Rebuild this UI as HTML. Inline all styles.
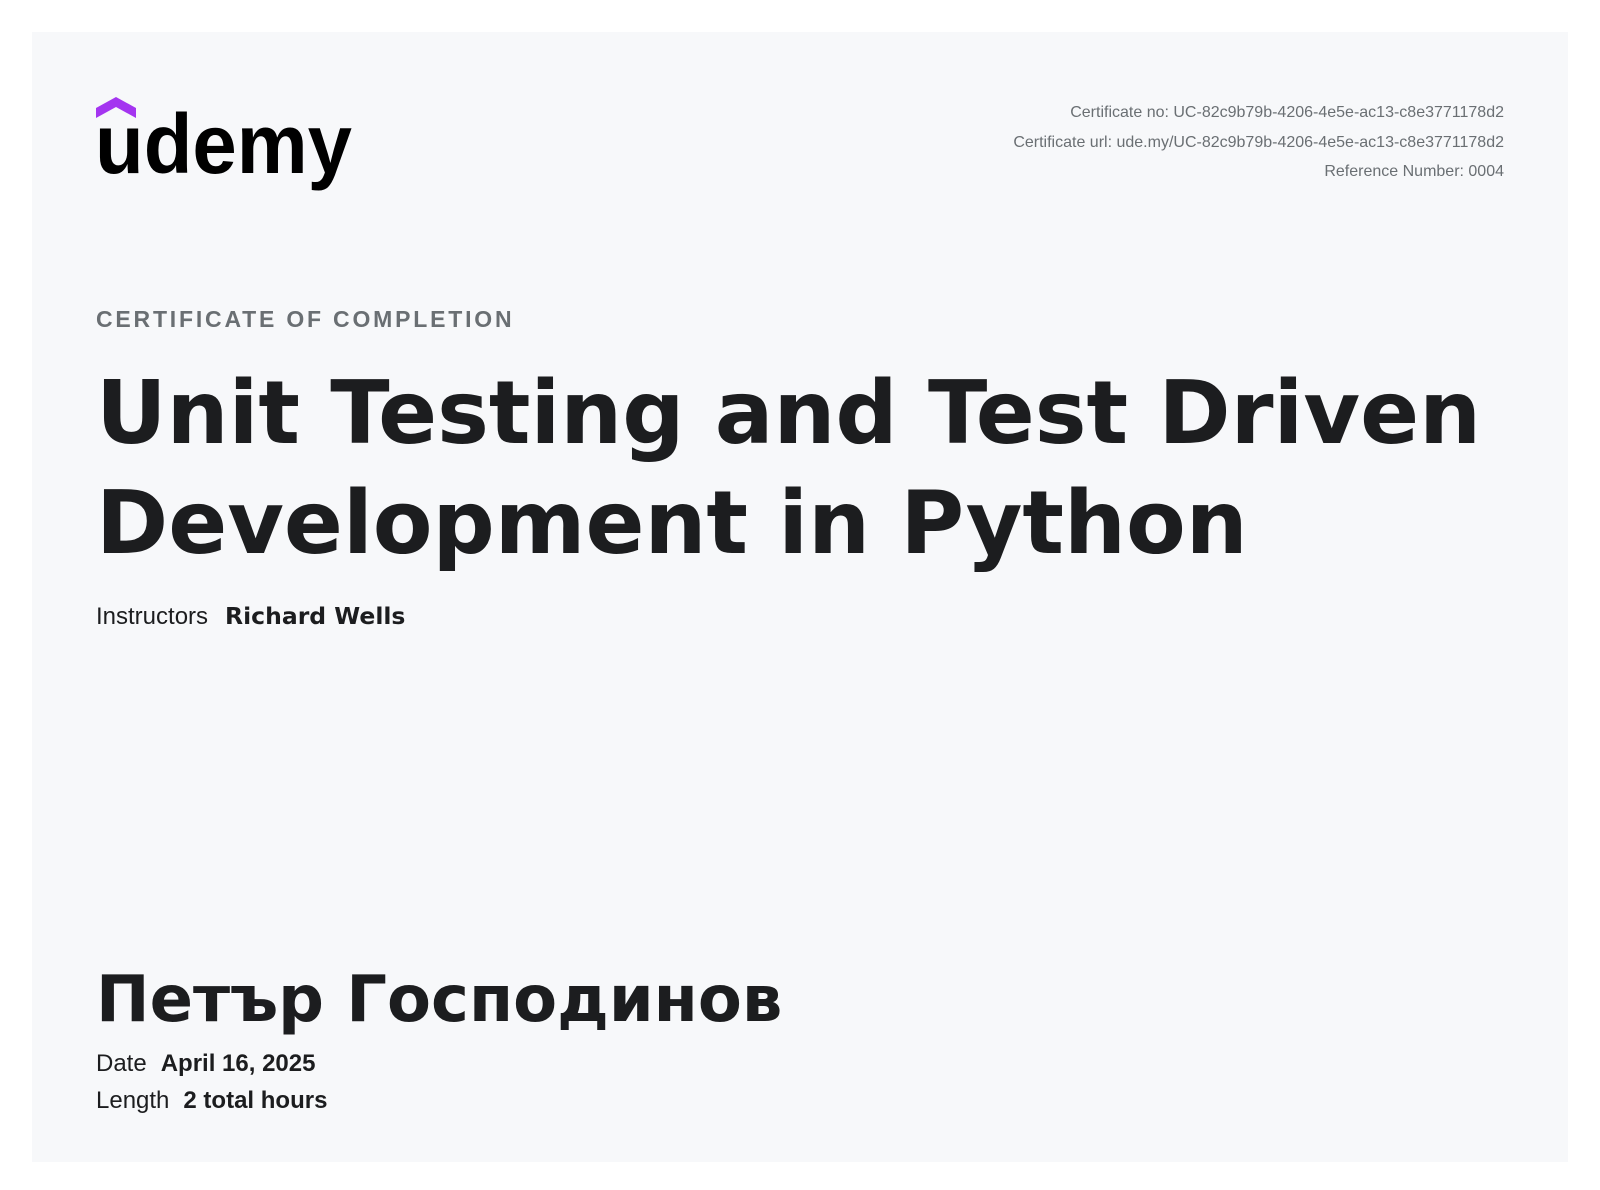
<!DOCTYPE html>
<html><head><meta charset="utf-8"><style>
html,body{margin:0;padding:0;background:#fff;}
body{width:1600px;height:1190px;position:relative;font-family:"Liberation Sans",sans-serif;overflow:hidden}
.card{position:absolute;left:32px;top:32px;width:1536px;height:1130px;background:#f7f8fa}
.meta{position:absolute;right:96px;top:98px;text-align:right;color:#6a6f73;font-size:16px;line-height:29.5px}
.abs{position:absolute;left:96px;margin:0}
.sub{top:306px;font-size:23px;font-weight:bold;letter-spacing:2.8px;color:#6a6f73}
.title{top:358px;font-family:"DejaVu Sans",sans-serif;font-weight:bold;font-size:87px;line-height:110px;color:#1c1d1f;white-space:nowrap}
.line{font-size:24px;color:#1c1d1f;white-space:nowrap}
.line b{margin-left:14px}
.name{top:960px;font-family:"DejaVu Sans",sans-serif;font-weight:bold;font-size:64px;line-height:80px;color:#1c1d1f;white-space:nowrap}
</style></head><body>
<div class="card"></div>
<svg style="position:absolute;left:0;top:0" width="400" height="220">
<path d="M96 108 L116 97 L136 108 L136 118 L116 107 L96 118 Z" fill="#a435f0"/>
<text x="95" y="173" font-family="Liberation Sans" font-weight="bold" font-size="84" textLength="257" lengthAdjust="spacingAndGlyphs" fill="#000">udemy</text>
</svg>
<div class="meta">Certificate no: UC-82c9b79b-4206-4e5e-ac13-c8e3771178d2<br>Certificate url: ude.my/UC-82c9b79b-4206-4e5e-ac13-c8e3771178d2<br>Reference Number: 0004</div>
<div class="abs sub">CERTIFICATE OF COMPLETION</div>
<div class="abs title">Unit Testing and Test Driven<br>Development in Python</div>
<div class="abs line" style="top:602px">Instructors<b style="font-family:'DejaVu Sans',sans-serif;font-size:23.5px;margin-left:17px">Richard Wells</b></div>
<div class="abs name">Петър Господинов</div>
<div class="abs line" style="top:1050px">Date<b>April 16, 2025</b></div>
<div class="abs line" style="top:1087px">Length<b>2 total hours</b></div>
</body></html>
